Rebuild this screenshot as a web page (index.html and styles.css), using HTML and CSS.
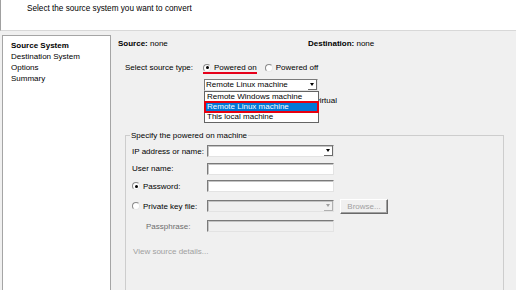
FILE: index.html
```html
<!DOCTYPE html>
<html lang="en">
<head>
    <meta charset="UTF-8">
    <title>Conversion - Source System</title>
    <link rel="stylesheet" href="styles.css">
</head>
<body>
    <div class="header">Select the source system you want to convert</div>

    <div class="content">
        <div class="nav">
            <div class="nav-item active">Source System</div>
            <div class="nav-item">Destination System</div>
            <div class="nav-item">Options</div>
            <div class="nav-item">Summary</div>
        </div>

        <div class="main">
            <div class="summary">
                <div><b>Source:</b> none</div>
                <div><b>Destination:</b> none</div>
            </div>

            <div class="type-row">
                <span class="type-label">Select source type:</span>
                <span class="option marked"><span class="radio checked"></span>Powered on</span>
                <span class="option"><span class="radio"></span>Powered off</span>
            </div>

            <div class="combo type-combo">
                <span class="combo-text">Remote Linux machine</span>
                <span class="combo-btn"><span class="arrow"></span></span>
                <ul class="dropdown">
                    <li>Remote Windows machine</li>
                    <li class="selected">Remote Linux machine</li>
                    <li>This local machine</li>
                </ul>
            </div>

            <div class="hint">virtual</div>

            <fieldset class="group">
                <legend>Specify the powered on machine</legend>
                <div class="form">
                    <span class="label">IP address or name:</span>
                    <div class="combo field">
                        <span class="combo-text"></span>
                        <span class="combo-btn"><span class="arrow"></span></span>
                    </div>
                    <span></span>

                    <span class="label">User name:</span>
                    <div class="field"></div>
                    <span></span>

                    <span class="label radio-label"><span class="radio checked"></span>Password:</span>
                    <div class="field"></div>
                    <span></span>

                    <span class="label radio-label"><span class="radio"></span>Private key file:</span>
                    <div class="combo field disabled">
                        <span class="combo-text"></span>
                        <span class="combo-btn"><span class="arrow"></span></span>
                    </div>
                    <span class="btn">Browse...</span>

                    <span class="label sub disabled-text">Passphrase:</span>
                    <div class="field disabled"></div>
                    <span></span>
                </div>
                <div class="details">View source details...</div>
            </fieldset>
        </div>
    </div>
</body>
</html>
```

FILE: styles.css
```css
html, body {
    margin: 0;
    padding: 0;
}
body {
    width: 516px;
    height: 290px;
    overflow: hidden;
    background: #f0f0f0;
    font-family: "Liberation Sans", Arial, sans-serif;
    font-size: 8px;
    color: #000;
}
.header {
    height: 30px;
    background: #fff;
    border-left: 1px solid #a0a0a0;
    border-bottom: 1px solid #d8d8d8;
    padding-left: 26px;
    line-height: 17px;
    font-size: 8.2px;
}
.content {
    display: flex;
    padding-top: 4px;
    height: 255px;
    overflow: hidden;
}
.nav {
    box-sizing: border-box;
    width: 109px;
    height: 258px;
    margin-left: 2px;
    padding: 4px 0 0 8px;
    background: #fff;
    border: 1px solid #a5a5a5;
    line-height: 11px;
}
.nav-item.active {
    font-weight: bold;
}
.main {
    flex: 1;
    padding: 3px 12px 0 7px;
}
.summary {
    display: grid;
    grid-template-columns: 190px auto;
    line-height: 11px;
}
.type-row {
    display: flex;
    align-items: center;
    height: 11px;
    margin-top: 13px;
    padding-left: 7px;
}
.type-label {
    width: 78px;
}
.option {
    display: flex;
    align-items: center;
    gap: 3px;
    height: 11px;
}
.option + .option {
    margin-left: 8px;
}
.marked {
    position: relative;
}
.marked::after {
    content: "";
    position: absolute;
    left: 0;
    right: 0;
    bottom: -1px;
    height: 2px;
    background: #e6001a;
}
.radio {
    box-sizing: border-box;
    width: 8px;
    height: 8px;
    border-radius: 50%;
    border: 1px solid;
    border-color: #8a8a8a #e8e8e8 #e8e8e8 #8a8a8a;
    background: #fff;
    display: flex;
    align-items: center;
    justify-content: center;
}
.radio.checked::after {
    content: "";
    width: 3px;
    height: 3px;
    border-radius: 50%;
    background: #000;
}

/* comboboxes and text fields */
.combo {
    display: flex;
    box-sizing: border-box;
    height: 12px;
    background: #fff;
    border: 1px solid;
    border-color: #7a7a7a #e3e3e3 #e3e3e3 #7a7a7a;
}
.combo-text {
    flex: 1;
    padding-left: 1px;
    line-height: 10px;
    white-space: nowrap;
}
.combo-btn {
    width: 9px;
    display: flex;
    align-items: center;
    justify-content: center;
    border-right: 1px solid #6a6a6a;
    border-bottom: 1px solid #6a6a6a;
    box-sizing: border-box;
}
.arrow {
    width: 0;
    height: 0;
    border-left: 2.5px solid transparent;
    border-right: 2.5px solid transparent;
    border-top: 3px solid #000;
}
.type-combo {
    position: relative;
    width: 114px;
    margin: 6px 0 0 86px;
}
.dropdown {
    position: absolute;
    z-index: 2;
    top: 11px;
    left: -1px;
    box-sizing: border-box;
    width: 115px;
    margin: 0;
    padding: 0;
    list-style: none;
    background: #fff;
    border: 1px solid #646464;
}
.dropdown li {
    height: 10px;
    line-height: 10px;
    padding-left: 2px;
    white-space: nowrap;
}
.dropdown li.selected {
    background: #0078d7;
    color: #fff;
    outline: 2px solid #e8000f;
    outline-offset: -1px;
}
.hint {
    width: 133px;
    margin: 4px 0 0 86px;
    line-height: 11px;
    text-align: right;
    white-space: nowrap;
}

/* group box */
.group {
    height: 200px;
    margin: 24px 0 0 7px;
    padding: 0 0 0 4px;
    border: 1px solid #cdcdcd;
    min-width: 0;
}
.group legend {
    padding: 0 1px;
    line-height: 11px;
}
.form {
    display: grid;
    grid-template-columns: 77px 127px 54px;
    grid-template-rows: 12px 12px 12px 17px 12px;
    row-gap: 5.5px;
    align-items: center;
    margin-top: 4px;
}
.label {
    padding-left: 2px;
    line-height: 11px;
    white-space: nowrap;
}
.radio-label {
    display: flex;
    align-items: center;
    gap: 3px;
}
.label.sub {
    padding-left: 16px;
}
.field {
    box-sizing: border-box;
    height: 12px;
    background: #fff;
    border: 1px solid;
    border-color: #7a7a7a #e3e3e3 #e3e3e3 #7a7a7a;
    box-shadow: inset 1px 1px 0 #c4c4c4;
}
.field.disabled {
    background: #f0f0f0;
}
.field.disabled .arrow {
    border-top-color: #a0a0a0;
}
.field.disabled .combo-btn {
    border-color: #b0b0b0;
}
.disabled-text {
    color: #6d6d6d;
}
.btn {
    box-sizing: border-box;
    width: 48px;
    height: 15px;
    margin-left: 6px;
    line-height: 13px;
    text-align: center;
    color: #a0a0a0;
    background: #f0f0f0;
    border: 1px solid;
    border-color: #fff #696969 #696969 #fff;
    box-shadow: inset -1px -1px 0 #a0a0a0;
}
.details {
    margin-top: 14px;
    padding-left: 3px;
    line-height: 11px;
    color: #a0a0a0;
}
```
